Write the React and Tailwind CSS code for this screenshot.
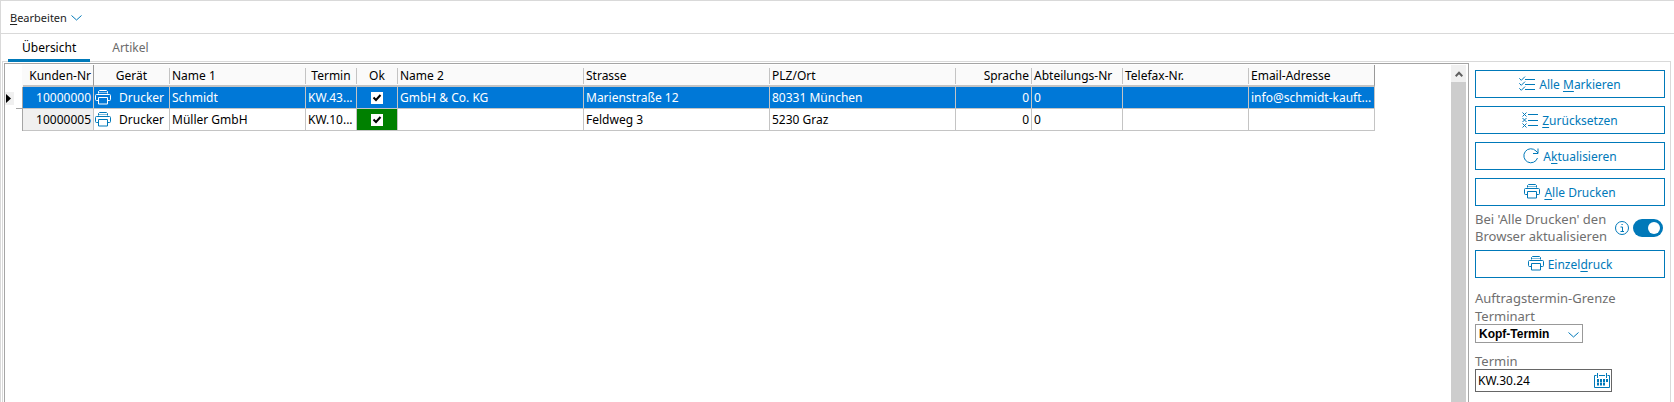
import React, { useState } from 'react';

const columns = [
    { key: 'nr', label: 'Kunden-Nr', width: 'w-[71px]', align: 'text-right' },
    { key: 'device', label: 'Gerät', width: 'w-[76px]', align: 'text-center' },
    { key: 'name1', label: 'Name 1', width: 'w-[136px]', align: 'text-left' },
    { key: 'date', label: 'Termin', width: 'w-[51px]', align: 'text-center' },
    { key: 'ok', label: 'Ok', width: 'w-[41px]', align: 'text-center' },
    { key: 'name2', label: 'Name 2', width: 'w-[186px]', align: 'text-left' },
    { key: 'street', label: 'Strasse', width: 'w-[186px]', align: 'text-left' },
    { key: 'city', label: 'PLZ/Ort', width: 'w-[186px]', align: 'text-left' },
    { key: 'lang', label: 'Sprache', width: 'w-[76px]', align: 'text-right' },
    { key: 'dept', label: 'Abteilungs-Nr', width: 'w-[91px]', align: 'text-left' },
    { key: 'fax', label: 'Telefax-Nr.', width: 'w-[126px]', align: 'text-left' },
    { key: 'email', label: 'Email-Adresse', width: 'w-[126px]', align: 'text-left' },
];

const customers = [
    { nr: '10000000', device: 'Drucker', name1: 'Schmidt', date: 'KW.43...', name2: 'GmbH & Co. KG', street: 'Marienstraße 12', city: '80331 München', lang: '0', dept: '0', fax: '', email: 'info@schmidt-kauft...' },
    { nr: '10000005', device: 'Drucker', name1: 'Müller GmbH', date: 'KW.10...', name2: '', street: 'Feldweg 3', city: '5230 Graz', lang: '0', dept: '0', fax: '', email: '' },
];

const PrinterIcon = ({ className }) => (
    <svg className={className} width="16" height="16" viewBox="0 0 16 16" fill="none" stroke="currentColor" strokeWidth="1">
        <path d="M3.5 3.5v-2l1-1h7l1 1v2M3 10.5H1.5a1 1 0 0 1-1-1v-4a1 1 0 0 1 1-1h13a1 1 0 0 1 1 1v4a1 1 0 0 1-1 1H13" />
        <path d="M3.5 7.5h9v6.5h-9z" />
        <path d="M3.5 2.5h9" strokeOpacity=".5" />
    </svg>
);

const ChecklistIcon = () => (
    <svg width="16" height="16" viewBox="0 0 16 16" fill="none" stroke="currentColor">
        <path d="M6 3.5H16M6 8.5H16M6 13.5H16" />
        <path d="M.3 2.3l2 2L6 .6M.3 7.3l2 2L6 5.6M.3 12.3l2 2L6 10.6" />
    </svg>
);

const ClearListIcon = () => (
    <svg width="16" height="16" viewBox="0 0 16 16" fill="none" stroke="currentColor">
        <path d="M6 2.5H16M6 8.5H16M6 13.5H16" />
        <path d="M.5 .5l4 4M4.5 .5l-4 4M.5 6l4 4M4.5 6l-4 4M.5 11.5l4 4M4.5 11.5l-4 4" />
    </svg>
);

const RefreshIcon = () => (
    <svg width="16" height="16" viewBox="0 0 16 16" fill="none" stroke="currentColor">
        <path d="M14.5 10A7 7 0 1 1 13 3l2 2" />
        <path d="M15 .5V5.5H10" />
    </svg>
);

const Chevron = ({ className }) => (
    <svg className={className} width="11" height="6" viewBox="0 0 11 6" fill="none" stroke="currentColor">
        <path d="M.5 .5l5 4.5 5-4.5" />
    </svg>
);

const CalendarIcon = () => (
    <svg width="16" height="16" viewBox="0 0 16 16" fill="none" stroke="currentColor">
        <path d="M2.5 2.5h-2v12h15v-12h-2M5 2.5h6M3.5 0v5M12.5 0v5" />
        <path d="M3 7.5h11M3 11h8" strokeWidth="3" strokeDasharray="2 1" />
    </svg>
);

const SideButton = ({ icon, children }) => (
    <button className="flex h-7 w-full items-center justify-center gap-1 border border-[#0079b9] bg-white text-xs text-[#0079b9] hover:bg-sky-50">
        {icon}
        <span className="pt-[2px]">{children}</span>
    </button>
);

const Key = ({ children }) => <span className="underline underline-offset-2">{children}</span>;

const App = () => {
    const [tab, setTab] = useState('Übersicht');
    const [selected, setSelected] = useState(0);
    const [checked, setChecked] = useState([true, true]);
    const [refresh, setRefresh] = useState(true);
    const [kind, setKind] = useState('Kopf-Termin');
    const [date, setDate] = useState('KW.30.24');

    const toggleOk = (index) => {
        setChecked((prev) => prev.map((value, i) => (i === index ? !value : value)));
    };

    return (
        <div className="flex min-h-screen flex-col border-t border-l border-[#d9d9d9] bg-white font-['Noto_Sans',sans-serif] text-[13px] leading-[18px] text-black">
            {/* Menu bar */}
            <header className="flex h-8 items-center px-2 pt-px">
                <button className="flex items-center gap-1 px-px text-[11px] text-[#222]">
                    <span><Key>B</Key>earbeiten</span>
                    <Chevron className="text-[#0079b9]" />
                </button>
            </header>

            <nav className="relative -mb-px flex h-[29px] border-t border-[#d9d9d9] px-[7px] text-xs">
                {['Übersicht', 'Artikel'].map((name) => (
                    <button
                        key={name}
                        className={`border-b-3 px-[14px] pt-[2px] ${tab === name ? 'border-[#0079b9] text-black' : 'ml-2 border-transparent text-[#6b6b6b]'}`}
                        onClick={() => setTab(name)}
                    >
                        {name}
                    </button>
                ))}
            </nav>

            <main className="mr-[3px] ml-px flex flex-1 border-t border-r border-l border-[#d9d9d9]">
                {/* Customer grid */}
                <section className="mt-px ml-px flex min-w-0 flex-1 border-t border-r border-l border-[#a5a5a5]">
                    <div className="min-w-0 flex-1 overflow-hidden pt-px">
                        <table className="w-[1370px] table-fixed border-separate border-spacing-0 text-xs">
                            <thead>
                                <tr className="h-[22px] bg-[#fafafa]">
                                    <th className="w-[18px] border-r border-[#fafafa] bg-white p-0" aria-label="Zeile" />
                                    {columns.map((col) => {
                                        const solid = col.key === 'nr' || col.key === 'email';
                                        return (
                                            <th key={col.key} className={`${col.width} border-b-2 border-b-[#c4c4c4] px-0 pt-[2px] pb-0 font-normal whitespace-nowrap ${solid ? 'border-r border-r-[#999]' : ''}`}>
                                                <div className={`h-4 px-[2px] leading-4 ${col.align} ${solid ? '' : 'border-r border-[#c4c4c4]'}`}>
                                                    {col.label}
                                                </div>
                                            </th>
                                        );
                                    })}
                                </tr>
                            </thead>
                            <tbody>
                                {customers.map((row, index) => {
                                    const active = selected === index;
                                    return (
                                        <tr key={row.nr} className={`h-[22px] leading-[18px] ${active ? 'bg-[#0078d7] text-white' : ''}`} onClick={() => setSelected(index)}>
                                            <td className="relative border-r border-[#a5a5a5] bg-white p-0">
                                                {active && (
                                                    <>
                                                        <svg className="bg-[#f0f0f0]" width="9" height="13" viewBox="0 0 9 13">
                                                            <path d="M1 2l5 4.5L1 11z" fill="#000" />
                                                        </svg>
                                                        <span className="absolute right-0 bottom-0 h-px w-1.5 bg-[#a5a5a5]" />
                                                    </>
                                                )}
                                            </td>
                                            {columns.map((col) => (
                                                <td
                                                    key={col.key}
                                                    className={`border-r border-b border-[#c4c4c4] p-0 whitespace-nowrap ${col.key === 'nr' && !active ? 'bg-[#f0f0f0]' : ''} ${col.key === 'ok' && !active ? 'bg-[#008000]' : ''}`}
                                                >
                                                    {col.key === 'device' && (
                                                        <div className="flex items-center gap-2 pl-px">
                                                            <PrinterIcon className={active ? 'text-white' : 'text-[#0079b9]'} />
                                                            {row.device}
                                                        </div>
                                                    )}
                                                    {col.key === 'ok' && (
                                                        <label className="relative mx-auto block size-3">
                                                            <input
                                                                type="checkbox"
                                                                aria-label={`Ok ${row.nr}`}
                                                                className="block size-3 appearance-none bg-white"
                                                                checked={checked[index]}
                                                                onChange={() => toggleOk(index)}
                                                            />
                                                            {checked[index] && (
                                                                <svg className="pointer-events-none absolute inset-0" width="12" height="12" viewBox="0 0 12 12">
                                                                    <path d="M2.5 5.5l2.5 2.5 4.5-5" fill="none" stroke="#000" strokeWidth="2" />
                                                                </svg>
                                                            )}
                                                        </label>
                                                    )}
                                                    {col.key !== 'device' && col.key !== 'ok' && (
                                                        <div className={`px-[2px] ${col.key === 'date' ? 'text-left' : col.align}`}>{row[col.key]}</div>
                                                    )}
                                                </td>
                                            ))}
                                        </tr>
                                    );
                                })}
                            </tbody>
                        </table>
                    </div>
                    {/* Scroll bar */}
                    <div className="mt-px mr-[2px] flex w-[15px] flex-col bg-[#cdcdcd]">
                        <button className="flex h-[17px] items-center justify-center bg-[#f0f0f0] text-[#606060]" aria-label="Nach oben">
                            <svg width="8" height="6" viewBox="0 0 8 6" fill="none" stroke="currentColor" strokeWidth="2">
                                <path d="M.7 5.2L4 1.8l3.3 3.4" />
                            </svg>
                        </button>
                    </div>
                </section>

                {/* Actions */}
                <aside className="w-[201px] shrink-0 pt-2 pr-[5px] pl-[6px] text-[#6f6f6f]">
                    <div className="flex flex-col gap-2">
                        <SideButton icon={<ChecklistIcon />}>Alle <Key>M</Key>arkieren</SideButton>
                        <SideButton icon={<ClearListIcon />}><Key>Z</Key>urücksetzen</SideButton>
                        <SideButton icon={<RefreshIcon />}>A<Key>k</Key>tualisieren</SideButton>
                        <SideButton icon={<PrinterIcon />}><Key>A</Key>lle Drucken</SideButton>
                    </div>
                    <div className="flex h-11 items-center justify-between pr-[2px]">
                        <label htmlFor="refresh" className="leading-[17px]">
                            Bei 'Alle Drucken' den<br />Browser aktualisieren
                        </label>
                        <div className="flex items-center gap-1">
                            <svg className="text-[#0079b9]" width="14" height="14" viewBox="0 0 14 14" fill="none" stroke="currentColor">
                                <circle cx="7" cy="7" r="6.5" />
                                <path d="M5.5 6h2v4.5M5.5 10.5h3.5M6.5 3.5h1.2" />
                            </svg>
                            <input
                                id="refresh"
                                type="checkbox"
                                role="switch"
                                checked={refresh}
                                onChange={() => setRefresh(!refresh)}
                                className="h-[18px] w-[30px] appearance-none rounded-full bg-gray-400 p-[3px] before:block before:size-3 before:rounded-full before:bg-white checked:bg-[#0079b9] checked:before:ml-3"
                            />
                        </div>
                    </div>
                    <SideButton icon={<PrinterIcon />}>Einzel<Key>d</Key>ruck</SideButton>
                    <h2 className="mt-[11px]">Auftragstermin-Grenze</h2>
                    <label htmlFor="kind" className="mt-px block leading-4">Terminart</label>
                    <div className="relative w-[108px]">
                        <select
                            id="kind"
                            value={kind}
                            onChange={(e) => setKind(e.target.value)}
                            className="block h-[19px] w-full appearance-none border border-[#999] bg-white px-[3px] font-['Liberation_Sans',sans-serif] text-xs leading-4 font-bold text-black"
                        >
                            <option>Kopf-Termin</option>
                            <option>Positions-Termin</option>
                        </select>
                        <Chevron className="pointer-events-none absolute top-2 right-1 text-[#0079b9]" />
                    </div>
                    <label htmlFor="date" className="mt-[10px] block leading-4">Termin</label>
                    <div className="flex h-[23px] w-[137px] items-center border border-[#666] pr-px">
                        <input id="date" type="text" value={date} onChange={(e) => setDate(e.target.value)} className="min-w-0 flex-1 pl-[2px] text-xs text-black outline-none" />
                        <button className="text-[#0079b9]" aria-label="Kalender"><CalendarIcon /></button>
                    </div>
                </aside>
            </main>
        </div>
    );
};

export default App;
